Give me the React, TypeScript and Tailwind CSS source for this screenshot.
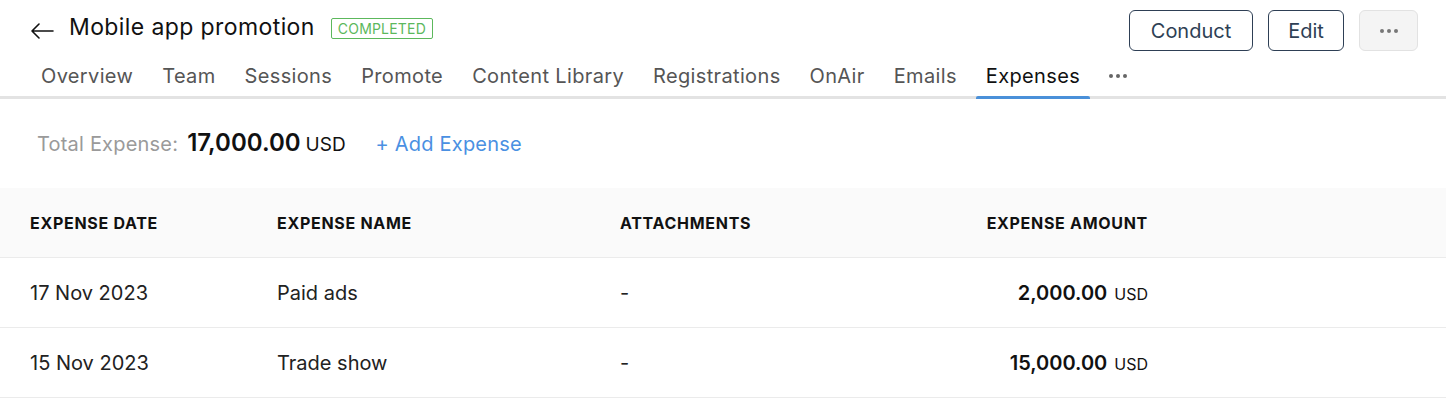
import React from "react";

const tabs = ["Overview", "Team", "Sessions", "Promote", "Content Library", "Registrations", "OnAir", "Emails", "Expenses"];

const rows = [
  { date: "17 Nov 2023", name: "Paid ads", att: "-", amt: "2,000.00" },
  { date: "15 Nov 2023", name: "Trade show", att: "-", amt: "15,000.00" },
];

export default function App() {
  return (
    <div className="w-[1446px] h-[404px] bg-white overflow-hidden" style={{ fontFamily: "Inter, 'Noto Sans', sans-serif" }}>
      {/* Header */}
      <div>
        <div className="flex items-start justify-between pl-[30px] pr-[28px] pt-[10px]">
          <div className="flex items-center h-[34px]">
            <svg width="24" height="16" viewBox="0 0 24 16" className="mt-[8px] text-[#111]">
              <path d="M23 8H2M9 1L2 8l7 7" fill="none" stroke="currentColor" strokeWidth="1.6" strokeLinecap="round" strokeLinejoin="round" />
            </svg>
            <span className="ml-[15px] text-[23px] text-[#111] tracking-[0.4px]">Mobile app promotion</span>
            <span className="ml-[16px] mt-[2px] border border-[#5cb85c] text-[#5cb85c] text-[14px] leading-[19px] px-[6px] rounded-[2px] tracking-[0.2px]">COMPLETED</span>
          </div>
          <div className="flex items-center gap-[15px]">
            <button className="h-[41px] w-[124px] border border-[#2e3f55] rounded-[6px] text-[20px] text-[#2e3f55]">Conduct</button>
            <button className="h-[41px] w-[76px] border border-[#2e3f55] rounded-[6px] text-[20px] text-[#2e3f55]">Edit</button>
            <button className="h-[41px] w-[59px] border border-[#e2e2e2] bg-[#f4f4f4] rounded-[6px] flex items-center justify-center gap-[3px]">
              <span className="w-[4px] h-[4px] rounded-full bg-[#777]" />
              <span className="w-[4px] h-[4px] rounded-full bg-[#777]" />
              <span className="w-[4px] h-[4px] rounded-full bg-[#777]" />
            </button>
          </div>
        </div>
        {/* Tabs */}
        <div className="flex pl-[31px] border-b-[3px] border-[#e3e3e3] h-[48px]">
          {tabs.map((t) => {
            const active = t === "Expenses";
            return (
              <div key={t} className="relative px-[10px] mr-[9px] h-full flex items-center pt-[5px]">
                <span className={`text-[20px] tracking-[0.35px] ${active ? "text-[#111]" : "text-[#555]"}`}>{t}</span>
                {active && <div className="absolute left-0 right-0 -bottom-[3px] h-[3px] bg-[#4a90d9] rounded-t-[2px]" />}
              </div>
            );
          })}
          <div className="px-[10px] h-full flex items-center gap-[3px] pt-[5px]">
            <span className="w-[4px] h-[4px] rounded-full bg-[#666]" />
            <span className="w-[4px] h-[4px] rounded-full bg-[#666]" />
            <span className="w-[4px] h-[4px] rounded-full bg-[#666]" />
          </div>
        </div>
      </div>

      {/* Total */}
      <div className="flex items-baseline pl-[37px] pt-[26px] h-[89px]">
        <span className="text-[20px] text-[#9a9a9a] tracking-[0.2px]">Total Expense:</span>
        <span className="ml-[9px] text-[24px] font-semibold text-[#111]">17,000.00</span>
        <span className="ml-[5px] text-[19px] text-[#111]">USD</span>
        <span className="ml-[30px] text-[20px] text-[#4a90e2] tracking-[0.2px]">+ Add Expense</span>
      </div>

      {/* Table */}
      <div>
        <div className="grid grid-cols-[247px_343px_264px_264px] pl-[30px] h-[70px] items-center bg-[#fafafa] border-b border-[#ebebeb] text-[16px] font-bold text-[#111] tracking-[0.7px]">
          <div>EXPENSE DATE</div>
          <div>EXPENSE NAME</div>
          <div>ATTACHMENTS</div>
          <div className="text-right">EXPENSE AMOUNT</div>
        </div>
        {rows.map((r) => (
          <div key={r.date} className="grid grid-cols-[247px_343px_264px_264px] pl-[30px] h-[70px] items-center border-b border-[#ebebeb] text-[20px] text-[#222]">
            <div>{r.date}</div>
            <div>{r.name}</div>
            <div>{r.att}</div>
            <div className="text-right">
              <span className="font-semibold text-[#111]">{r.amt}</span>
              <span className="ml-[7px] text-[16px] text-[#111]">USD</span>
            </div>
          </div>
        ))}
      </div>
    </div>
  );
}
